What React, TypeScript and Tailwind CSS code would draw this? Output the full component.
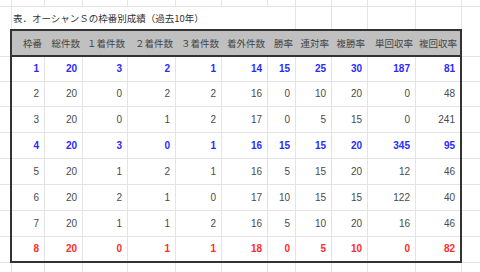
const cols = ['w-[33px]', 'w-[38px]', 'w-[45px]', 'w-[48px]', 'w-[46px]', 'w-[46px]', 'w-[28px]', 'w-[36px]', 'w-[36px]', 'w-[48px]', 'w-[44px]'];
const sheetCols = ['w-[33px]', 'w-[38px]', 'w-[45px]', 'w-[48px]', 'w-[46px]', 'w-[46px]', 'w-[28px]', 'w-[36px]', 'w-[36px]', 'w-[48px]', 'w-[46px]'];
const rowH = ['h-[25px]', 'h-[25px]', 'h-[26px]', 'h-[26px]', 'h-[26px]', 'h-[26px]', 'h-[26px]', 'h-[24px]'];
const marginH = ['h-[28px]', 'h-[25px]', 'h-[25px]', 'h-[26px]', 'h-[26px]', 'h-[26px]', 'h-[26px]', 'h-[26px]', 'h-[26px]'];

const headers = ['枠番', '総件数', '１着件数', '２着件数', '３着件数', '着外件数', '勝率', '連対率', '複勝率', '単回収率', '複回収率'];

const rows = [
  { tone: 'blue', v: [1, 20, 3, 2, 1, 14, 15, 25, 30, 187, 81] },
  { tone: 'plain', v: [2, 20, 0, 2, 2, 16, 0, 10, 20, 0, 48] },
  { tone: 'plain', v: [3, 20, 0, 1, 2, 17, 0, 5, 15, 0, 241] },
  { tone: 'blue', v: [4, 20, 3, 0, 1, 16, 15, 15, 20, 345, 95] },
  { tone: 'plain', v: [5, 20, 1, 2, 1, 16, 5, 15, 20, 12, 46] },
  { tone: 'plain', v: [6, 20, 2, 1, 0, 17, 10, 15, 15, 122, 40] },
  { tone: 'plain', v: [7, 20, 1, 1, 2, 16, 5, 10, 20, 16, 46] },
  { tone: 'red', v: [8, 20, 0, 1, 1, 18, 0, 5, 10, 0, 82] },
];

const toneClass: Record<string, string> = {
  blue: 'text-[#2a2aff] font-bold',
  red: 'text-[#ff2a2a] font-bold',
  plain: 'text-[#4a4a4a]',
};

function SheetStrip({ height }: { height: string }) {
  // plain spreadsheet gridlines above / below the table
  return (
    <div className={`flex ${height}`}>
      <div className="w-[12px] shrink-0 border-r border-[#e4e4e4]" />
      {sheetCols.map((w, i) => (
        <div key={i} className={`${w} shrink-0 border-r border-[#e4e4e4]`} />
      ))}
      <div className="flex-1" />
    </div>
  );
}

function MarginColumn({ width }: { width: string }) {
  return (
    <div className={`${width} flex flex-col`}>
      {marginH.map((h, i) => (
        <div key={i} className={`${h} shrink-0 border-b border-[#e4e4e4]`} />
      ))}
    </div>
  );
}

export default function App() {
  return (
    <div className="w-[480px] h-[272px] overflow-hidden bg-white flex flex-col font-['Liberation_Sans','Noto_Sans_CJK_JP',sans-serif]">
      <div className="border-b border-[#e4e4e4]">
        <SheetStrip height="h-[6px]" />
      </div>

      {/* title row, text overflows across the left cells */}
      <div className="flex h-[24px]">
        <div className="w-[12px] shrink-0 border-r border-[#e4e4e4]" />
        <div className="w-[256px] shrink-0 flex items-center pl-[1px] text-[9.5px] text-[#333] font-['Noto_Sans_CJK_JP',sans-serif] whitespace-nowrap">
          表．オーシャンＳの枠番別成績（過去10年）
        </div>
        {sheetCols.slice(6).map((w, i) => (
          <div key={i} className={`${w} shrink-0 border-r border-[#e4e4e4]`} />
        ))}
        <div className="flex-1" />
      </div>

      <div className="flex">
        <MarginColumn width="w-[10px]" />

        <div className="w-[452px] shrink-0 border-2 border-[#333]">
          <div className="flex h-[26px] bg-[#c0c0c0] border-b-2 border-[#333]">
            {headers.map((h, i) => (
              <div
                key={h}
                className={`${cols[i]} shrink-0 flex items-center justify-end pr-[3px] text-[9.5px] text-[#444] whitespace-nowrap font-['Noto_Sans_CJK_JP',sans-serif]`}
              >
                {h}
              </div>
            ))}
          </div>

          {rows.map((r, ri) => (
            <div
              key={ri}
              className={`flex ${rowH[ri]} ${ri < rows.length - 1 ? 'border-b border-[#e4e4e4]' : ''}`}
            >
              {r.v.map((n, ci) => (
                <div
                  key={ci}
                  className={`${cols[ci]} shrink-0 flex items-center justify-end pr-[5px] text-[10px] ${toneClass[r.tone]} ${
                    ci < cols.length - 1 ? 'border-r border-[#e4e4e4]' : ''
                  }`}
                >
                  {n}
                </div>
              ))}
            </div>
          ))}
        </div>

        <div className="flex-1">
          <MarginColumn width="w-full" />
        </div>
      </div>

      <SheetStrip height="h-[10px]" />
    </div>
  );
}
